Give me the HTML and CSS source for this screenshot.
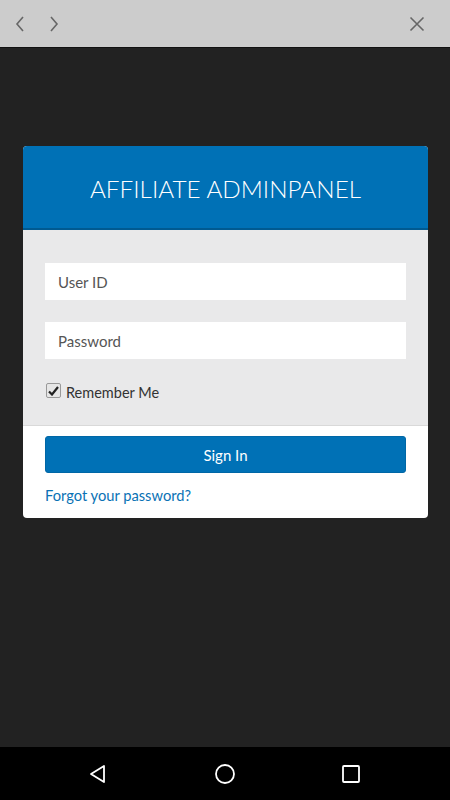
FILE: index.html
```html
<!DOCTYPE html>
<html>
<head>
<meta charset="utf-8">
<link rel="stylesheet" href="styles.css">
</head>
<body>
<div class="screen">
  <div class="topbar">
    <svg class="ico back" width="12" height="16" viewBox="0 0 12 16"><path d="M9 1 L3 8 L9 15" fill="none" stroke="#666" stroke-width="1.6"/></svg>
    <svg class="ico fwd" width="12" height="16" viewBox="0 0 12 16"><path d="M3 1 L9 8 L3 15" fill="none" stroke="#666" stroke-width="1.6"/></svg>
    <span class="spacer"></span>
    <svg class="ico close" width="16" height="16" viewBox="0 0 16 16"><path d="M1.5 1.5 L14.5 14.5 M14.5 1.5 L1.5 14.5" fill="none" stroke="#666" stroke-width="1.6"/></svg>
  </div>
  <div class="main">
    <div class="card">
      <div class="card-head">AFFILIATE ADMINPANEL</div>
      <div class="card-body">
        <div class="field">User ID</div>
        <div class="field">Password</div>
        <label class="remember">
          <span class="check"><svg width="11" height="10" viewBox="0 0 11 10"><path d="M1 5.5 L4 8.5 L10 1" fill="none" stroke="#222" stroke-width="2.2"/></svg></span>
          <span>Remember Me</span>
        </label>
      </div>
      <div class="card-foot">
        <div class="btn">Sign In</div>
        <a class="forgot">Forgot your password?</a>
      </div>
    </div>
  </div>
  <div class="navbar">
    <svg width="22" height="22" viewBox="0 0 22 22"><path d="M17 3 L17 19 L4 11 Z" fill="none" stroke="#fff" stroke-width="1.8" stroke-linejoin="round"/></svg>
    <svg width="22" height="22" viewBox="0 0 22 22"><circle cx="11" cy="11" r="9" fill="none" stroke="#fff" stroke-width="1.8"/></svg>
    <svg width="22" height="22" viewBox="0 0 22 22"><rect x="3" y="3" width="16" height="16" rx="1" fill="none" stroke="#fff" stroke-width="1.8"/></svg>
  </div>
</div>
</body>
</html>
```
FILE: styles.css
```css
* { box-sizing: border-box; }
html, body { margin: 0; padding: 0; }
body { font-family: Lato, "Noto Sans", sans-serif; }
.screen { width: 450px; height: 800px; display: flex; flex-direction: column; background: #222; }
.topbar { height: 48px; background: #cccccc; border-bottom: 1px solid #111; display: flex; align-items: center; padding: 0 25px 0 14px; flex-shrink: 0; }
.ico { display: block; }
.back { margin-right: 22px; }
.spacer { flex: 1; }
.main { flex: 1; padding: 98px 22px 0 23px; }
.card { width: 405px; border-radius: 4px; overflow: hidden; background: #fff; }
.card-head { height: 84px; background: #0071b6; border-bottom: 2px solid #005a91; color: #fff; font-weight: 300; font-size: 24.3px; display: flex; align-items: center; justify-content: center; padding-top: 2px; }
.card-body { background: #e9e9ea; padding: 33px 22px 0 22px; height: 196px; border-bottom: 1px solid #d9d9d9; }
.field { height: 37px; background: #fff; margin-bottom: 22px; padding-left: 13px; display: flex; align-items: center; font-size: 15px; color: #555; }
.remember { display: flex; align-items: center; font-size: 14.5px; color: #333; margin-top: 25px; }
.check { width: 15px; height: 15px; border: 1px solid #999; border-radius: 2px; background: #e6e6e6; display: flex; align-items: center; justify-content: center; margin: 0 5px 0 1px; position: relative; top: -2px; }
.card-foot { padding: 10px 22px 14px 22px; }
.btn { height: 37px; background: #0071b6; border: 1px solid #0067a6; border-radius: 3px; color: #fff; font-size: 15px; display: flex; align-items: center; justify-content: center; }
.forgot { display: block; margin-top: 14px; color: #0a72b5; font-size: 14.7px; line-height: 17px; }
.navbar { height: 53px; background: #000; display: flex; align-items: center; justify-content: space-between; padding: 0 88px 0 87px; flex-shrink: 0; }
```
